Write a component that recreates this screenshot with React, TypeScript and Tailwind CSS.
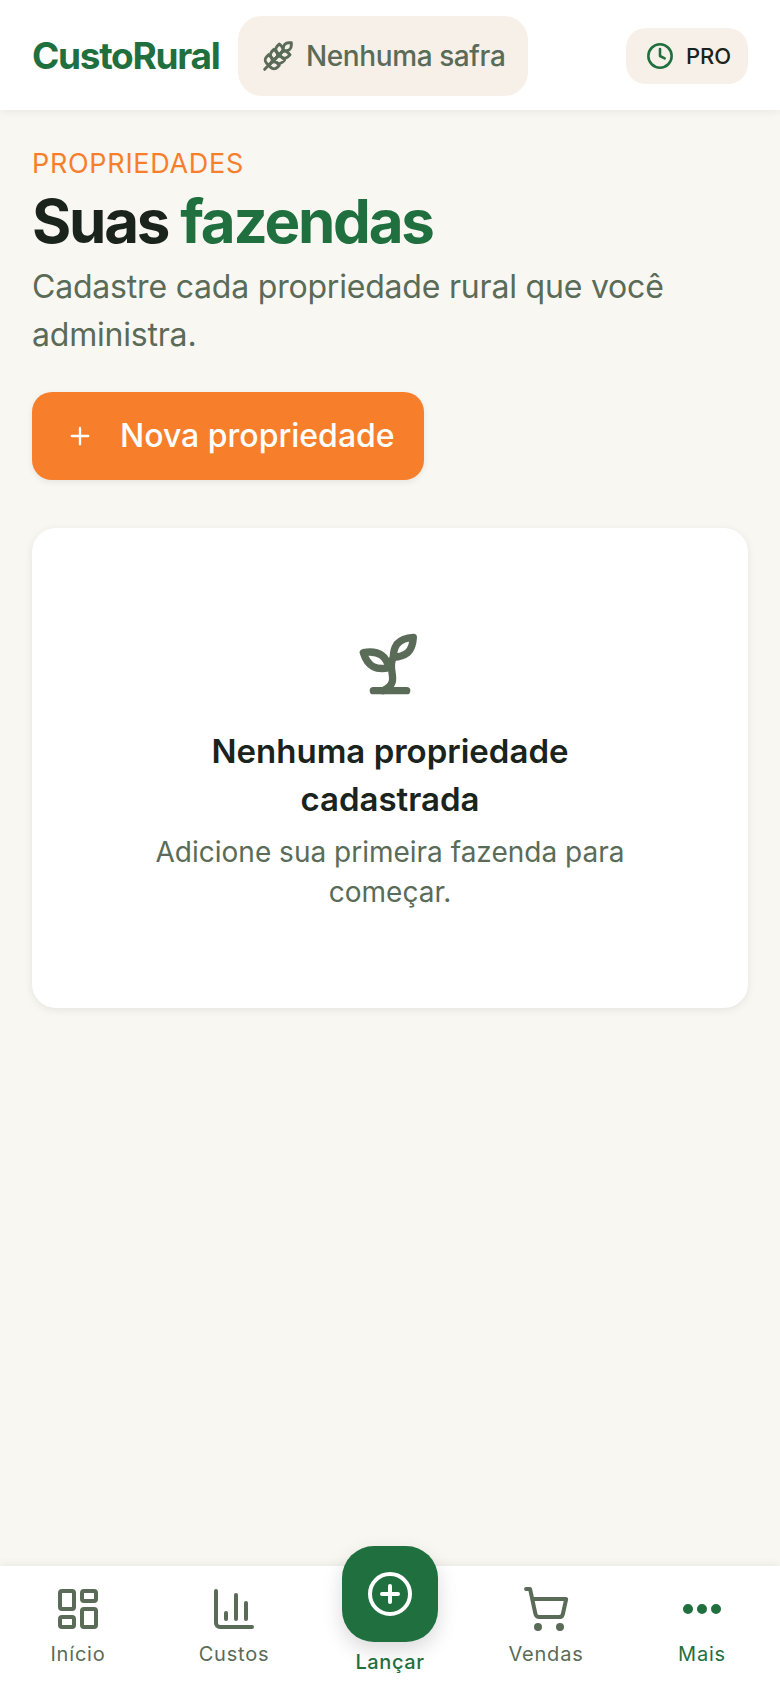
import React from "react";
import {
    ChartColumn,
    CirclePlus,
    Clock,
    Ellipsis,
    LayoutDashboard,
    Plus,
    ShoppingCart,
    Wheat
} from "lucide-react";

const font = "font-['Inter','Liberation_Sans',sans-serif]";

// older lucide sprout, the current one has different leaves
function SproutIcon() {
    return (
        <svg
            viewBox="0 0 24 24"
            fill="none"
            stroke="currentColor"
            strokeWidth="2.2"
            strokeLinecap="round"
            strokeLinejoin="round"
            className="size-20 text-[#5a6b58]">
            <path d="M7 20h10" />
            <path d="M10 20c5.5-2.5.8-6.4 3-10" />
            <path d="M9.5 9.4c1.1.8 1.8 2.2 2.3 3.7-2 .4-3.5.4-4.8-.3-1.2-.6-2.3-1.9-3-4.2 2.8-.5 4.4 0 5.5.8z" />
            <path d="M14.1 6a7 7 0 0 0-1.1 4c1.9-.1 3.3-.6 4.3-1.4 1-1 1.6-2.3 1.7-4.6-2.7.1-4 1-4.9 2z" />
        </svg>
    );
}

function NavItem({
    icon,
    label,
    active
}: {
    icon: React.ReactNode;
    label: string;
    active?: boolean;
}) {
    return (
        <div className="flex flex-1 flex-col items-center gap-[7px] pt-[19px]">
            {icon}
            <span
                className={`text-[20px] leading-[28px] tracking-[0.8px] ${active ? "text-[#1f6f3f]" : "text-[#5a6b58]"}`}>
                {label}
            </span>
        </div>
    );
}

export default function App() {
    return (
        <div className={`flex h-[1688px] w-[780px] flex-col overflow-hidden bg-[#f9f7f2] ${font}`}>
            <header className="z-10 flex h-[110px] shrink-0 items-center bg-white pl-8 pr-8 pt-[2px] shadow-[0_2px_8px_rgba(0,0,0,0.06)]">
                <span className="w-[188px] text-[37px] font-bold tracking-[-1.3px] whitespace-nowrap text-[#1f6f3f]">
                    CustoRural
                </span>
                <div className="ml-[18px] flex h-20 w-[290px] items-center gap-[12px] rounded-[24px] bg-[#f7f0e8] pl-6">
                    <Wheat className="size-8 text-[#5a6b58]" strokeWidth={2.2} />
                    <span className="text-[28px] font-medium tracking-[-0.4px] text-[#5a6b58]">
                        Nenhuma safra
                    </span>
                </div>
                <div className="ml-auto flex h-14 w-[122px] items-center gap-3 rounded-[20px] bg-[#f7f0e8] pl-[20px]">
                    <Clock className="size-7 text-[#1f6f3f]" strokeWidth={2.2} />
                    <span className="text-[22px] font-medium text-[#1a231c]">PRO</span>
                </div>
            </header>

            <main className="flex-1 px-8 pt-[34px]">
                <p className="text-[27px] leading-[40px] tracking-[0.7px] text-[#f77f2c]">
                    PROPRIEDADES
                </p>
                <h1 className="mt-px text-[60px] font-bold leading-[72px] tracking-[-2.2px] text-[#1a231c]">
                    Suas <span className="text-[#1f6f3f]">fazendas</span>
                </h1>
                <p className="mt-[6px] text-[32px] leading-[48px] tracking-[-0.2px] text-[#5a6b58]">
                    Cadastre cada propriedade rural que você administra.
                </p>
                <button className="mt-[33px] flex h-[88px] w-[392px] items-center gap-[26px] rounded-[20px] bg-[#f77f2c] pl-[34px] text-[32px] font-medium text-white shadow-[0_2px_6px_rgba(0,0,0,0.08)]">
                    <Plus className="size-[28px]" strokeWidth={2} />
                    Nova propriedade
                </button>
                <section className="mt-12 flex h-[480px] flex-col items-center rounded-[24px] bg-white px-16 pt-[96px] text-center shadow-[0_2px_8px_rgba(0,0,0,0.08)]">
                    <SproutIcon />
                    <h2 className="mt-[23px] max-w-[420px] text-[33px] font-semibold leading-[48px] text-[#1a231c]">
                        Nenhuma propriedade cadastrada
                    </h2>
                    <p className="mt-[9px] text-[28px] leading-[40px] text-[#5a6b58]">
                        Adicione sua primeira fazenda para começar.
                    </p>
                </section>
            </main>

            <nav className="z-10 flex h-[122px] shrink-0 bg-white shadow-[0_-2px_8px_rgba(0,0,0,0.06)]">
                <NavItem
                    icon={<LayoutDashboard className="size-12 text-[#5a6b58]" strokeWidth={2} />}
                    label="Início"
                />
                <NavItem
                    icon={<ChartColumn className="size-12 text-[#5a6b58]" strokeWidth={2} />}
                    label="Custos"
                />
                <div className="flex flex-1 flex-col items-center">
                    <div className="-mt-5 flex size-24 items-center justify-center rounded-[32px] bg-[#1f6f3f] shadow-[0_8px_20px_rgba(0,0,0,0.15)]">
                        <CirclePlus className="size-12 text-white" strokeWidth={2} />
                    </div>
                    <span className="mt-[6px] text-[20px] font-medium leading-[28px] tracking-[0.6px] text-[#1f6f3f]">
                        Lançar
                    </span>
                </div>
                <NavItem
                    icon={<ShoppingCart className="size-12 text-[#5a6b58]" strokeWidth={2} />}
                    label="Vendas"
                />
                <NavItem
                    icon={<Ellipsis className="size-12 fill-[#1f6f3f] text-[#1f6f3f]" strokeWidth={3} />}
                    label="Mais"
                    active
                />
            </nav>
        </div>
    );
}
